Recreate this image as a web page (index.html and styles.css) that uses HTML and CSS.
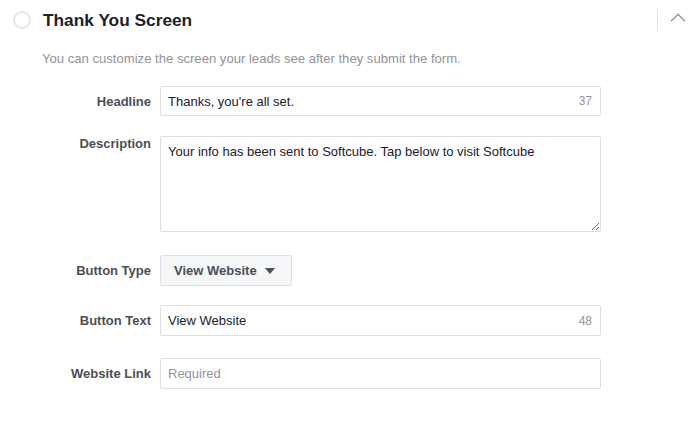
FILE: index.html
```html
<!DOCTYPE html>
<html>
<head>
<meta charset="utf-8">
<link rel="stylesheet" href="styles.css">
</head>
<body>
<div class="panel">
  <div class="header">
    <span class="radio"></span>
    <h1 class="title">Thank You Screen</h1>
    <div class="collapse">
      <span class="sep"></span>
      <svg class="chev" width="16" height="9" viewBox="0 0 16 9"><path d="M1 8.2 L8 1.2 L15 8.2" fill="none" stroke="#90949c" stroke-width="1.3"/></svg>
    </div>
  </div>
  <p class="intro">You can customize the screen your leads see after they submit the form.</p>
  <div class="form">
    <div class="row r-headline">
      <label class="lbl">Headline</label>
      <div class="field"><span class="val">Thanks, you're all set.</span><span class="count">37</span></div>
    </div>
    <div class="row r-desc">
      <label class="lbl lbl-top">Description</label>
      <textarea class="area">Your info has been sent to Softcube. Tap below to visit Softcube</textarea>
    </div>
    <div class="row r-type">
      <label class="lbl">Button Type</label>
      <div class="btn">View Website <svg class="caret" width="10" height="6" viewBox="0 0 10 6"><path d="M0 0 H10 L5 6 Z" fill="#4b4f56"/></svg></div>
    </div>
    <div class="row r-text">
      <label class="lbl">Button Text</label>
      <div class="field"><span class="val">View Website</span><span class="count">48</span></div>
    </div>
    <div class="row r-link">
      <label class="lbl">Website Link</label>
      <div class="field"><span class="val ph">Required</span></div>
    </div>
  </div>
</div>
</body>
</html>
```
FILE: styles.css
```css
* { box-sizing: border-box; }
body {
  margin: 0;
  background: #fff;
  font-family: "Liberation Sans", Arial, Helvetica, sans-serif;
  color: #1d2129;
}
.panel { width: 700px; height: 435px; }
.header {
  display: flex;
  align-items: center;
  height: 39px;
  padding-left: 13px;
}
.radio {
  width: 18px;
  height: 18px;
  border: 2px solid #e4e5e8;
  border-radius: 50%;
  flex: none;
}
.title {
  margin: 0 0 0 12px;
  font-size: 17.3px;
  line-height: 20px;
  font-weight: bold;
  color: #1d2129;
  flex: 1;
}
.collapse {
  display: flex;
  align-items: center;
  margin-right: 14px;
}
.sep {
  width: 1px;
  height: 22px;
  background: #e3e4e7;
  margin-right: 12px;
}
.chev { display: block; margin-top: -5px; }
.intro {
  margin: 12px 0 0 42px;
  font-size: 13.1px;
  line-height: 16px;
  color: #90949c;
}
.form {
  display: flex;
  flex-direction: column;
}
.row {
  display: grid;
  grid-template-columns: 151px 441px;
  column-gap: 9px;
  align-items: center;
}
.r-headline { margin-top: 19px; }
.r-desc { margin-top: 20px; align-items: start; }
.r-type { margin-top: 23px; }
.r-text { margin-top: 19px; }
.r-link { margin-top: 22px; }
.lbl {
  text-align: right;
  font-size: 13px;
  font-weight: bold;
  color: #4b4f56;
}
.field {
  height: 30px;
  border: 1px solid #dddfe2;
  border-radius: 2px;
  display: flex;
  align-items: center;
  padding: 0 8px 0 7px;
  font-size: 13px;
}
.r-text .field, .r-link .field { height: 31px; }
.val { flex: 1; color: #1d2129; }
.val.ph { color: #90949c; }
.count { font-size: 12px; color: #90949c; }
.area {
  display: block;
  width: 441px;
  height: 96px;
  border: 1px solid #dddfe2;
  border-radius: 2px;
  padding: 7px 7px;
  font-family: "Liberation Sans", Arial, Helvetica, sans-serif;
  font-size: 13px;
  line-height: 16px;
  color: #1d2129;
  resize: vertical;
  margin: 0;
  outline: none;
}
.btn {
  justify-self: start;
  width: 132px;
  height: 31px;
  background: #f5f6f7;
  border: 1px solid #dddfe2;
  border-radius: 2px;
  display: flex;
  align-items: center;
  padding-left: 13px;
  gap: 8px;
  font-size: 13px;
  font-weight: bold;
  color: #4b4f56;
}
.caret { display: block; }
```
